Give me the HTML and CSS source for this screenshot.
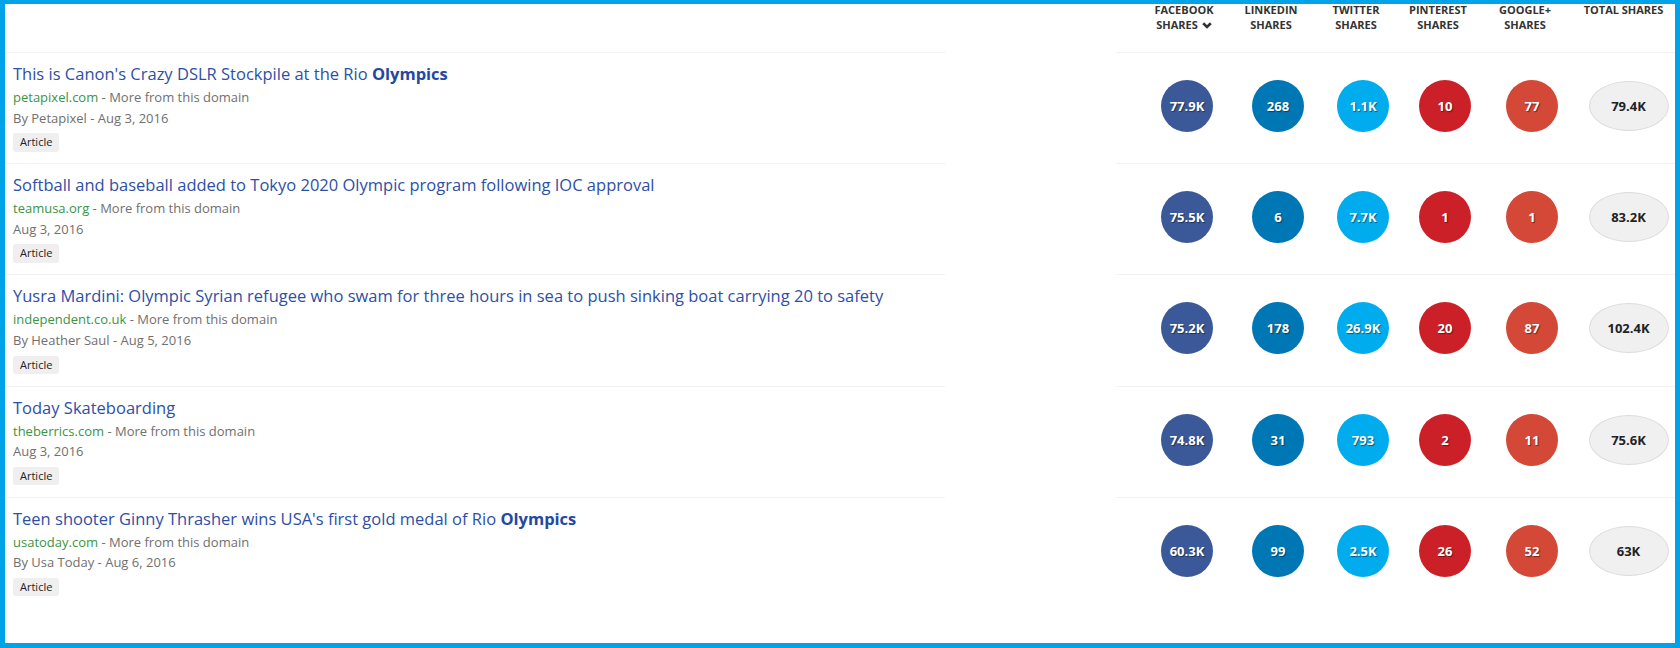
FILE: index.html
```html
<!DOCTYPE html>
<html>
<head>
<meta charset="utf-8">
<link rel="stylesheet" href="styles.css">
</head>
<body>
<div class="frame">
  <div class="row head">
    <div class="left"></div>
    <div class="gap"></div>
    <div class="right heads">
      <div class="h h-fb">Facebook<br>Shares <svg class="chev" width="10" height="7" viewBox="0 0 10 7"><polyline points="1.2,1.3 5,5 8.8,1.3" fill="none" stroke="#333" stroke-width="2.6"/></svg></div>
      <div class="h">Linkedin<br>Shares</div>
      <div class="h">Twitter<br>Shares</div>
      <div class="h">Pinterest<br>Shares</div>
      <div class="h">Google+<br>Shares</div>
      <div class="h h-tot">Total Shares</div>
    </div>
  </div>

  <div class="row">
    <div class="left cell">
      <div class="title">This is Canon's Crazy DSLR Stockpile at the Rio <b>Olympics</b></div>
      <div class="meta"><span class="dom">petapixel.com</span> - More from this domain</div>
      <div class="meta">By Petapixel - Aug 3, 2016</div>
      <span class="badge">Article</span>
    </div>
    <div class="gap"></div>
    <div class="right cell stats">
      <div class="s"><span class="c fb">77.9K</span></div>
      <div class="s"><span class="c li">268</span></div>
      <div class="s"><span class="c tw">1.1K</span></div>
      <div class="s"><span class="c pi">10</span></div>
      <div class="s"><span class="c gp">77</span></div>
      <div class="s tot"><span class="t">79.4K</span></div>
    </div>
  </div>

  <div class="row">
    <div class="left cell">
      <div class="title">Softball and baseball added to Tokyo 2020 Olympic program following IOC approval</div>
      <div class="meta"><span class="dom">teamusa.org</span> - More from this domain</div>
      <div class="meta">Aug 3, 2016</div>
      <span class="badge">Article</span>
    </div>
    <div class="gap"></div>
    <div class="right cell stats">
      <div class="s"><span class="c fb">75.5K</span></div>
      <div class="s"><span class="c li">6</span></div>
      <div class="s"><span class="c tw">7.7K</span></div>
      <div class="s"><span class="c pi">1</span></div>
      <div class="s"><span class="c gp">1</span></div>
      <div class="s tot"><span class="t">83.2K</span></div>
    </div>
  </div>

  <div class="row">
    <div class="left cell">
      <div class="title">Yusra Mardini: Olympic Syrian refugee who swam for three hours in sea to push sinking boat carrying 20 to safety</div>
      <div class="meta"><span class="dom">independent.co.uk</span> - More from this domain</div>
      <div class="meta">By Heather Saul - Aug 5, 2016</div>
      <span class="badge">Article</span>
    </div>
    <div class="gap"></div>
    <div class="right cell stats">
      <div class="s"><span class="c fb">75.2K</span></div>
      <div class="s"><span class="c li">178</span></div>
      <div class="s"><span class="c tw">26.9K</span></div>
      <div class="s"><span class="c pi">20</span></div>
      <div class="s"><span class="c gp">87</span></div>
      <div class="s tot"><span class="t">102.4K</span></div>
    </div>
  </div>

  <div class="row">
    <div class="left cell">
      <div class="title">Today Skateboarding</div>
      <div class="meta"><span class="dom">theberrics.com</span> - More from this domain</div>
      <div class="meta">Aug 3, 2016</div>
      <span class="badge">Article</span>
    </div>
    <div class="gap"></div>
    <div class="right cell stats">
      <div class="s"><span class="c fb">74.8K</span></div>
      <div class="s"><span class="c li">31</span></div>
      <div class="s"><span class="c tw">793</span></div>
      <div class="s"><span class="c pi">2</span></div>
      <div class="s"><span class="c gp">11</span></div>
      <div class="s tot"><span class="t">75.6K</span></div>
    </div>
  </div>

  <div class="row">
    <div class="left cell">
      <div class="title">Teen shooter Ginny Thrasher wins USA's first gold medal of Rio <b>Olympics</b></div>
      <div class="meta"><span class="dom">usatoday.com</span> - More from this domain</div>
      <div class="meta">By Usa Today - Aug 6, 2016</div>
      <span class="badge">Article</span>
    </div>
    <div class="gap"></div>
    <div class="right cell stats">
      <div class="s"><span class="c fb">60.3K</span></div>
      <div class="s"><span class="c li">99</span></div>
      <div class="s"><span class="c tw">2.5K</span></div>
      <div class="s"><span class="c pi">26</span></div>
      <div class="s"><span class="c gp">52</span></div>
      <div class="s tot"><span class="t">63K</span></div>
    </div>
  </div>
</div>
</body>
</html>
```

FILE: styles.css
```css
* { box-sizing: border-box; }
html, body { margin: 0; padding: 0; background: #fff; }
body { font-family: "Open Sans", "Liberation Sans", sans-serif; color: #333; }

.frame {
  width: 1680px;
  height: 648px;
  border: 5px solid #00a2e8;
  border-top-width: 4px;
  overflow: hidden;
  background: #fff;
}

.row {
  display: grid;
  grid-template-columns: 940px 171px 559px;
  height: 111.2px;
}
.row.head { height: 48px; }

.cell { border-top: 1px solid #f2f2f2; }

.left.cell { padding: 8px 8px 0 8px; }

.title {
  font-size: 16.5px;
  line-height: 26px;
  color: #2e4fa6;
  white-space: nowrap;
}
.title b { font-weight: 700; color: #2448a3; }

.meta {
  font-size: 13px;
  line-height: 20.6px;
  color: #707070;
  white-space: nowrap;
}
.dom { color: #3a9545; }

.badge {
  display: inline-block;
  margin-top: 5px;
  padding: 2px 7px;
  font-size: 11px;
  line-height: 14.5px;
  color: #222;
  background: #efefef;
  border-radius: 3px;
}

.heads, .stats {
  display: grid;
  grid-template-columns: 90px 92px 78px 86px 88px 99px;
  padding-left: 26px;
}

.heads { align-items: start; margin-top: -2.5px; }
.h {
  font-size: 11px;
  font-weight: 700;
  line-height: 15px;
  text-transform: uppercase;
  text-align: center;
  color: #333;
  padding-right: 14px;
  white-space: nowrap;
}
.h-fb { padding-right: 6px; }
.h-tot { padding-left: 6px; padding-right: 10px; }
.chev { vertical-align: 0px; margin-left: 1px; }

.stats { align-items: center; padding-bottom: 4px; }
.s { display: flex; justify-content: center; }
.s.tot { padding-left: 6px; }

.c {
  width: 52px;
  height: 52px;
  border-radius: 50%;
  display: flex;
  align-items: center;
  justify-content: center;
  color: #fff;
  font-size: 13px;
  font-weight: 700;
  text-shadow: 1px 1px 1px rgba(0,0,0,0.45);
}
.fb { background: #3b5998; }
.li { background: #0077b5; }
.tw { background: #00acee; }
.pi { background: #cb2027; }
.gp { background: #d34836; }

.t {
  width: 80px;
  height: 50px;
  border-radius: 50%;
  background: #f0f0f0;
  border: 1px solid #dcdcdc;
  display: flex;
  align-items: center;
  justify-content: center;
  color: #222;
  font-size: 13px;
  font-weight: 700;
}
```
